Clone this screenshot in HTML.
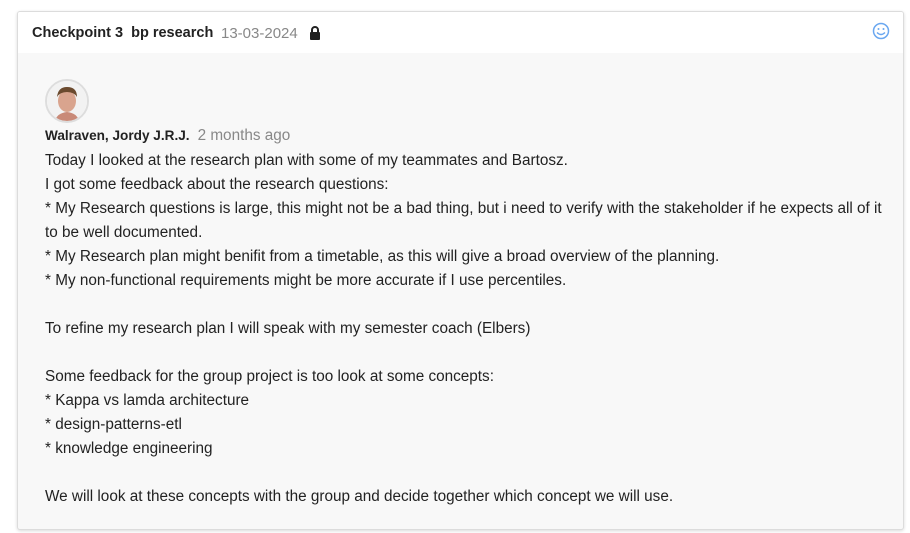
<!DOCTYPE html>
<html><head><style>
body{margin:0;background:#fff;font-family:"Liberation Sans",sans-serif;}
.card{position:absolute;left:17px;top:11px;width:885px;height:517px;border:1px solid #dcdcdc;border-radius:3px;box-shadow:0 1px 3px rgba(0,0,0,.15);background:#f8f8f8;overflow:hidden}
.hd{height:41px;background:#fff;position:relative;font-size:14.5px;color:#222}
.hd .t{position:absolute;left:14px;top:13px;font-weight:bold}
.hd .d{position:absolute;left:203px;top:13px;color:#888;font-size:15px}
.av{position:absolute;left:27px;top:67px;width:40px;height:40px;border-radius:50%;border:2px solid #ddd;background:#fff;overflow:hidden}
.nm{position:absolute;left:27px;top:115px;font-size:13.6px;font-weight:bold;color:#222}
.nm span{font-weight:normal;color:#888;margin-left:8px;font-size:15.3px}
.tx{position:absolute;left:27px;top:137px;width:855px;font-size:15.3px;line-height:24px;color:#222}
</style></head><body>
<div class="card">
<div class="hd"><span class="t">Checkpoint 3&nbsp; bp research</span><span class="d">13-03-2024</span>
<svg style="position:absolute;left:291px;top:14px" width="12" height="14" viewBox="0 0 12 14"><path d="M3 6V4a3 3 0 0 1 6 0v2" stroke="#222" stroke-width="2" fill="none"/><rect x="1" y="6" width="10" height="8" rx="1" fill="#222"/></svg>
<svg style="position:absolute;left:854px;top:10px" width="18" height="18" viewBox="0 0 18 18"><circle cx="9" cy="9" r="7.5" stroke="#6aa7f0" stroke-width="1.5" fill="none"/><circle cx="6.5" cy="7" r="1" fill="#6aa7f0"/><circle cx="11.5" cy="7" r="1" fill="#6aa7f0"/><path d="M5 10.5q4 4 8 0" stroke="#6aa7f0" stroke-width="1.3" fill="none"/></svg>
</div>
<div class="av"><svg width="40" height="40" viewBox="0 0 40 40"><rect width="40" height="40" fill="#f2f2f2"/><path d="M8 40q2-8 12-9q10 1 12 9z" fill="#c98a78"/><ellipse cx="20" cy="20" rx="9" ry="11" fill="#d9a48e"/><path d="M10 16q1-10 10-10q10 0 10 10q-3-5-10-5q-7 0-10 5z" fill="#6b4a2e"/></svg></div>
<div class="nm">Walraven, Jordy J.R.J.<span>2 months ago</span></div>
<div class="tx">Today I looked at the research plan with some of my teammates and Bartosz.<br>I got some feedback about the research questions:<br>* My Research questions is large, this might not be a bad thing, but i need to verify with the stakeholder if he expects all of it<br>to be well documented.<br>* My Research plan might benifit from a timetable, as this will give a broad overview of the planning.<br>* My non-functional requirements might be more accurate if I use percentiles.<br><br>To refine my research plan I will speak with my semester coach (Elbers)<br><br>Some feedback for the group project is too look at some concepts:<br>* Kappa vs lamda architecture<br>* design-patterns-etl<br>* knowledge engineering<br><br>We will look at these concepts with the group and decide together which concept we will use.</div>
</div>
</body></html>
